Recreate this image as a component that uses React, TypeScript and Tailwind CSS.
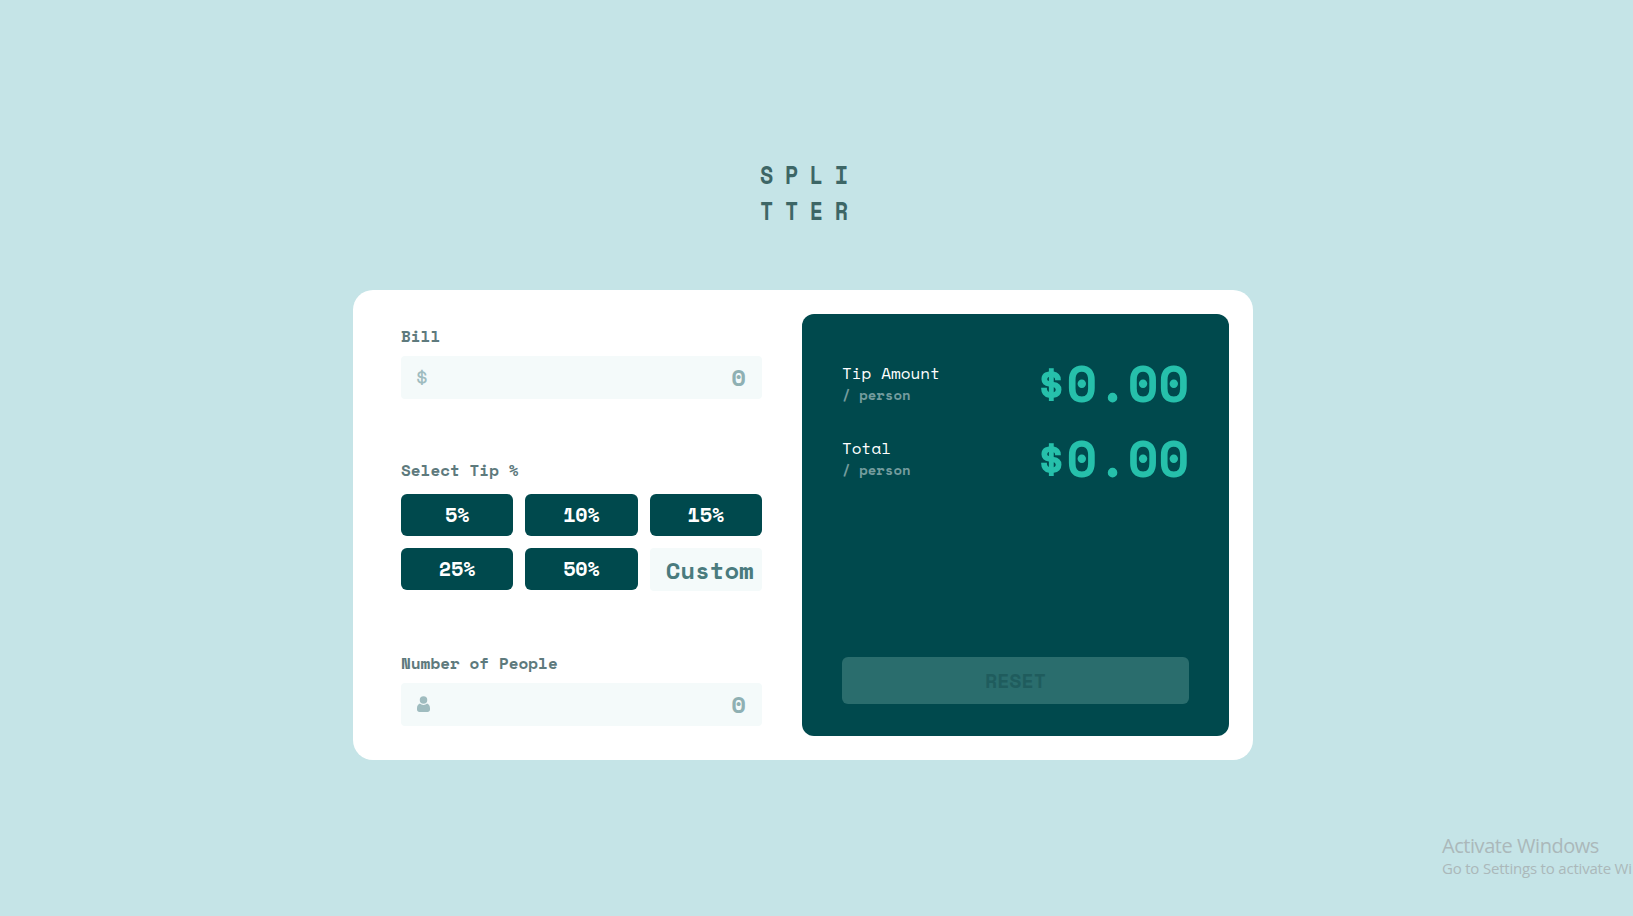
import React from "react";

const mono = "font-['Space_Mono','Liberation_Mono',monospace]";

function FieldLabel({ children }: { children: React.ReactNode }) {
  return (
    <div className="h-6 whitespace-pre text-[16px] leading-6 font-bold text-[#5e7a7d]">
      {children}
    </div>
  );
}

function PersonIcon() {
  return (
    <svg width="13" height="16" viewBox="0 0 13 16" fill="#9fbcbf">
      <circle cx="6.5" cy="3.9" r="3.75" />
      <path d="M2.9 7.6C1.1 8.2 0 9.9 0 12.3v1.2C0 15.100 1 16 2.500 16h8c1.500 0 2.500-.9 2.500-2.500v-1.200c0-2.400-1.100-4.100-2.900-4.700C9.200 8.500 7.900 9 6.500 9s-2.700-.5-3.600-1.400z" />
    </svg>
  );
}

function NumberField({ icon }: { icon: React.ReactNode }) {
  return (
    <div className="flex h-[42.5px] items-center justify-between rounded-[4px] bg-[#f4fafa] px-4">
      {icon}
      <span className="text-[24px] leading-[42px] font-bold text-[#8fb0b3]">0</span>
    </div>
  );
}

function TipButton({ value }: { value: string }) {
  return (
    <button className="h-[42px] rounded-[6px] bg-[#00494d] text-[20px] leading-[42px] font-bold text-white">
      {value}
    </button>
  );
}

function ResultRow({ title }: { title: string }) {
  return (
    <div className="flex h-[75px] justify-between">
      <div className="pt-2">
        <div className="text-[16px] leading-6 text-white">{title}</div>
        <div className="text-[14px] leading-5 font-bold text-[#749c9e]">/ person</div>
      </div>
      <div className="text-[50px] leading-[60px] font-bold text-[#26c0ab]">$0.00</div>
    </div>
  );
}

export default function App() {
  return (
    <main className={`relative h-[916px] w-full overflow-hidden bg-[#c5e4e7] pt-[157px] ${mono}`}>
      <h1 className="ml-[759.5px] w-[130px] origin-left scale-x-[0.87] text-[25px] leading-9 font-bold tracking-[13.3px] text-[#3d6666]">
        SPLI
        <br />
        TTER
      </h1>

      <section className="mt-[61px] ml-[353px] flex h-[470px] w-[900px] gap-10 rounded-[20px] bg-white py-6 pr-6 pl-12">
        <div className="flex w-[361px] flex-col pt-[10px]">
          <FieldLabel>Bill</FieldLabel>
          <div className="mt-2">
            <NumberField icon={<span className="-ml-[2px] text-[23px] leading-[42px] text-[#9fbcbf]">$</span>} />
          </div>

          <div className="mt-[59.5px]">
            <FieldLabel>Select Tip %</FieldLabel>
          </div>
          <div className="mt-3 grid grid-cols-3 gap-3">
            {["5%", "10%", "15%", "25%", "50%"].map((v) => (
              <TipButton key={v} value={v} />
            ))}
            <div className="h-[43px] overflow-hidden rounded-[4px] bg-[#f4fafa] pl-4 text-[24px] leading-[44px] font-bold text-[#4a7b7e]">
              Custom
            </div>
          </div>

          <div className="mt-[60px]">
            <FieldLabel>Number of People</FieldLabel>
          </div>
          <div className="mt-2">
            <NumberField icon={<PersonIcon />} />
          </div>
        </div>

        <div className="flex w-[427px] flex-col rounded-[12px] bg-[#00494d] px-10 pt-[39px] pb-8">
          <ResultRow title="Tip Amount" />
          <ResultRow title="Total" />
          <button className="mt-auto h-[47px] rounded-[6px] bg-[#2a6d6d] text-[20px] font-bold text-[#1f5c5d]">
            RESET
          </button>
        </div>
      </section>

      <aside className="absolute top-[832px] left-[1442px] whitespace-nowrap font-['Segoe_UI','Open_Sans',sans-serif] text-[#abb8ba]">
        <div className="text-[20px] leading-[27px] tracking-[-0.45px]">Activate Windows</div>
        <div className="text-[15px] leading-[18px] tracking-[-0.2px]">Go to Settings to activate Wi</div>
      </aside>
    </main>
  );
}
